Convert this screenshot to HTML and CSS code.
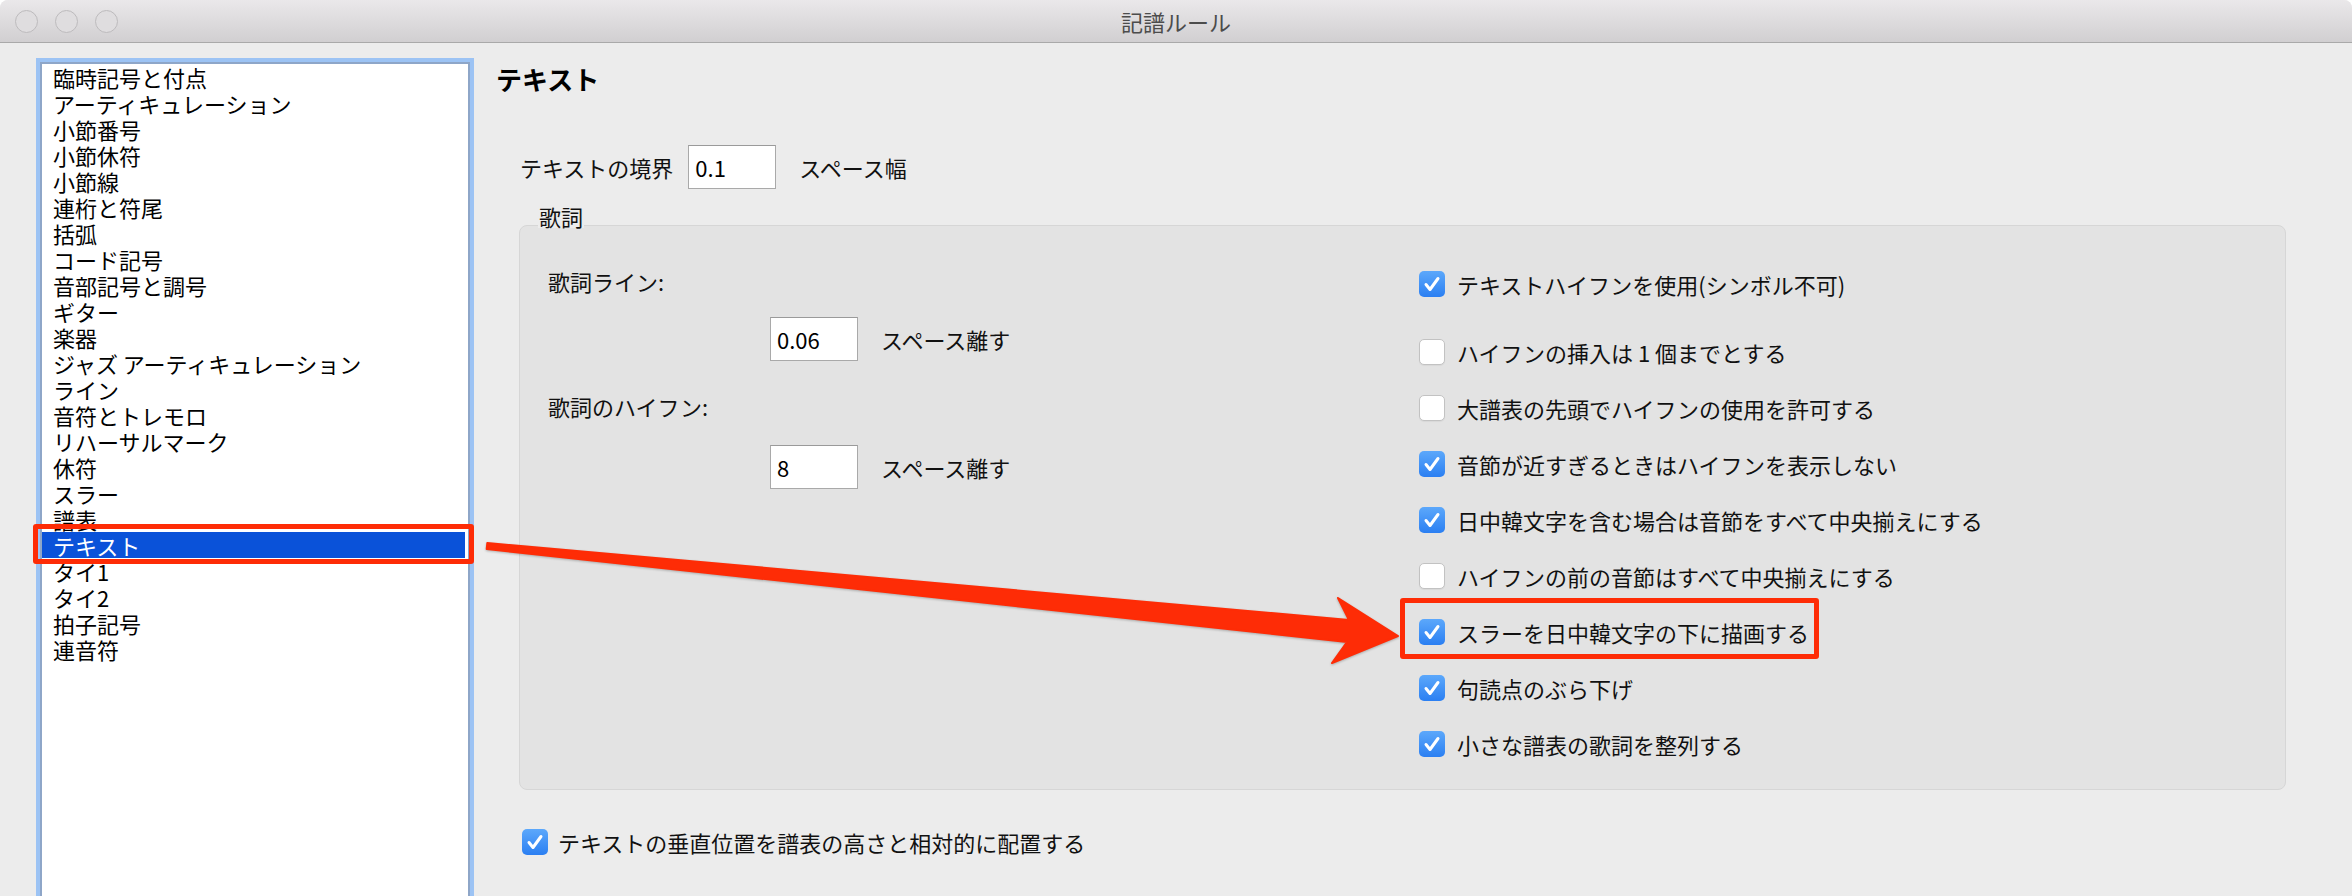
FILE: index.html
```html
<!DOCTYPE html>
<html lang="ja">
<head>
    <meta charset="UTF-8">
    <title>記譜ルール</title>
    <link rel="stylesheet" href="styles.css">
</head>
<body>
    <div class="window">
        <div class="titlebar">
            <div class="lights">
                <span class="light"></span>
                <span class="light"></span>
                <span class="light"></span>
            </div>
            <div class="title">記譜ルール</div>
            <div></div>
        </div>

        <div class="main">
            <ul class="category-list">
                <li>臨時記号と付点</li>
                <li>アーティキュレーション</li>
                <li>小節番号</li>
                <li>小節休符</li>
                <li>小節線</li>
                <li>連桁と符尾</li>
                <li>括弧</li>
                <li>コード記号</li>
                <li>音部記号と調号</li>
                <li>ギター</li>
                <li>楽器</li>
                <li>ジャズ アーティキュレーション</li>
                <li>ライン</li>
                <li>音符とトレモロ</li>
                <li>リハーサルマーク</li>
                <li>休符</li>
                <li>スラー</li>
                <li>譜表</li>
                <li class="selected">テキスト</li>
                <li>タイ1</li>
                <li>タイ2</li>
                <li>拍子記号</li>
                <li>連音符</li>
            </ul>

            <section class="panel">
                <h1>テキスト</h1>

                <div class="border-row">
                    <label for="border">テキストの境界</label>
                    <input type="text" id="border" class="num" value="0.1">
                    <span class="unit">スペース幅</span>
                </div>

                <div class="group-title">歌詞</div>
                <div class="group">
                    <div class="group-left">
                        <div class="group-label">歌詞ライン:</div>
                        <div class="spacing-row first">
                            <input type="text" class="num" value="0.06">
                            <span class="unit">スペース離す</span>
                        </div>
                        <div class="group-label second">歌詞のハイフン:</div>
                        <div class="spacing-row">
                            <input type="text" class="num" value="8">
                            <span class="unit">スペース離す</span>
                        </div>
                    </div>

                    <div class="group-right">
                        <div class="check first"><span class="box on"><svg viewBox="0 0 26 26"><path d="M7 13.5 L11 18.5 L19 7.5"/></svg></span>テキストハイフンを使用(シンボル不可)</div>
                        <div class="check second"><span class="box off"></span>ハイフンの挿入は 1 個までとする</div>
                        <div class="check"><span class="box off"></span>大譜表の先頭でハイフンの使用を許可する</div>
                        <div class="check"><span class="box on"><svg viewBox="0 0 26 26"><path d="M7 13.5 L11 18.5 L19 7.5"/></svg></span>音節が近すぎるときはハイフンを表示しない</div>
                        <div class="check"><span class="box on"><svg viewBox="0 0 26 26"><path d="M7 13.5 L11 18.5 L19 7.5"/></svg></span>日中韓文字を含む場合は音節をすべて中央揃えにする</div>
                        <div class="check"><span class="box off"></span>ハイフンの前の音節はすべて中央揃えにする</div>
                        <div class="check flagged"><span class="box on"><svg viewBox="0 0 26 26"><path d="M7 13.5 L11 18.5 L19 7.5"/></svg></span>スラーを日中韓文字の下に描画する</div>
                        <div class="check"><span class="box on"><svg viewBox="0 0 26 26"><path d="M7 13.5 L11 18.5 L19 7.5"/></svg></span>句読点のぶら下げ</div>
                        <div class="check"><span class="box on"><svg viewBox="0 0 26 26"><path d="M7 13.5 L11 18.5 L19 7.5"/></svg></span>小さな譜表の歌詞を整列する</div>
                    </div>
                </div>

                <div class="check bottom"><span class="box on"><svg viewBox="0 0 26 26"><path d="M7 13.5 L11 18.5 L19 7.5"/></svg></span>テキストの垂直位置を譜表の高さと相対的に配置する</div>
            </section>
        </div>

        <!-- annotation arrow drawn over the dialog -->
        <svg class="arrow" viewBox="0 0 2352 896">
            <polygon points="487.3,543 1349,620 1338,598 1398,636 1332,663 1347,642 486.7,549"/>
        </svg>
    </div>
</body>
</html>
```

FILE: styles.css
```css
body {
    margin: 0;
    background: #ffffff;
    font-family: "Noto Sans CJK JP", "Liberation Sans", sans-serif;
    color: #111;
    overflow: hidden;
}
.window {
    position: relative;
    width: 2352px;
    height: 896px;
    background: #ececec;
    border-radius: 8px 8px 0 0;
    overflow: hidden;
}
.titlebar {
    height: 42px;
    border-bottom: 1px solid #a9a9a9;
    background: linear-gradient(#eae8ea, #d1cfd1);
    display: grid;
    grid-template-columns: 1fr auto 1fr;
    align-items: center;
}
.lights {
    display: flex;
    gap: 17px;
    padding-left: 15px;
}
.light {
    width: 21px;
    height: 21px;
    border-radius: 50%;
    background: #dfdddf;
    border: 1px solid #bdbbbd;
}
.title {
    font-size: 22px;
    color: #4c4c4c;
}
.main {
    display: flex;
    height: 853px;
}
.category-list {
    list-style: none;
    margin: 19px 0 0 40px;
    padding: 0;
    width: 430px;
    height: 900px;
    box-sizing: border-box;
    flex: none;
    background: #ffffff;
    border: 2px solid #8ea6c8;
    box-shadow: 0 0 0 4px #9cc3f4;
}
.category-list li {
    font-size: 22px;
    line-height: 26px;
    height: 26px;
    padding-left: 11px;
    white-space: nowrap;
    color: #000;
}
.category-list li.selected {
    position: relative;
    margin-right: 3px;
    background: #0a52d9;
    color: #ffffff;
}
.category-list li.selected::after {
    content: "";
    position: absolute;
    top: -8px;
    bottom: -6px;
    left: -9px;
    right: -9px;
    border: 5px solid #fe2c06;
    border-radius: 3px;
}
.panel {
    flex: 1;
    margin-left: 26px;
    padding-top: 20px;
}
.panel h1 {
    margin: 0;
    font-size: 26px;
    line-height: 32px;
    font-weight: bold;
    color: #000;
}
.border-row {
    display: flex;
    align-items: center;
    height: 43px;
    margin: 50px 0 0 24px;
    font-size: 22px;
}
.border-row label {
    margin-right: 15px;
}
.num {
    width: 88px;
    height: 44px;
    box-sizing: border-box;
    border: 1px solid #a9a9a9;
    border-top-color: #9a9a9a;
    background: #ffffff;
    font-family: "Noto Sans CJK JP", sans-serif;
    font-size: 22px;
    color: #000;
    padding: 0 6px;
    margin: 0;
    outline: none;
}
.unit {
    margin-left: 23px;
    font-size: 22px;
}
.group-title {
    position: relative;
    z-index: 1;
    width: fit-content;
    margin: 16px 0 -3px 42px;
    padding: 0 1px;
    font-size: 22px;
    line-height: 24px;
    background: #ececec;
}
.group {
    display: grid;
    grid-template-columns: 871px 1fr;
    margin: 0 66px 0 23px;
    padding: 40px 0 31px 28px;
    background: #e3e3e3;
    border: 1px solid #d6d6d6;
    border-radius: 8px;
}
.group-label {
    font-size: 22px;
    line-height: 30px;
}
.group-label.second {
    margin-top: 30px;
}
.spacing-row {
    display: flex;
    align-items: center;
    margin: 24px 0 0 222px;
}
.spacing-row.first {
    margin-top: 21px;
}
.group-right {
    margin-top: 4px;
}
.check {
    display: flex;
    align-items: center;
    gap: 12px;
    width: max-content;
    height: 28px;
    margin-top: 28px;
    font-size: 22px;
    line-height: 28px;
    color: #111;
}
.check.first {
    margin-top: 0;
}
.check.second {
    margin-top: 40px;
}
.check.flagged {
    position: relative;
}
.check.flagged::after {
    content: "";
    position: absolute;
    top: -20px;
    bottom: -13px;
    left: -19px;
    right: -10px;
    border: 5px solid #fe2c06;
    border-radius: 3px;
}
.check.bottom {
    margin: 38px 0 0 26px;
    gap: 10px;
}
.box {
    width: 26px;
    height: 26px;
    box-sizing: border-box;
    border-radius: 5px;
    flex: none;
}
.box.on {
    background: linear-gradient(#5ca8fb, #2b7ff2);
}
.box.off {
    background: #ffffff;
    border: 1px solid #c2c2c2;
    box-shadow: 0 1px 1px rgba(0, 0, 0, 0.05);
}
.box svg {
    display: block;
    width: 26px;
    height: 26px;
}
.box svg path {
    fill: none;
    stroke: #ffffff;
    stroke-width: 3;
    stroke-linecap: round;
    stroke-linejoin: round;
}
.arrow {
    position: absolute;
    top: 0;
    left: 0;
    width: 2352px;
    height: 896px;
    pointer-events: none;
}
.arrow polygon {
    fill: #fe2c06;
    stroke: #fe2c06;
    stroke-width: 2;
    stroke-linejoin: round;
    filter: drop-shadow(0 1px 1px rgba(0, 0, 0, 0.25));
}
```
